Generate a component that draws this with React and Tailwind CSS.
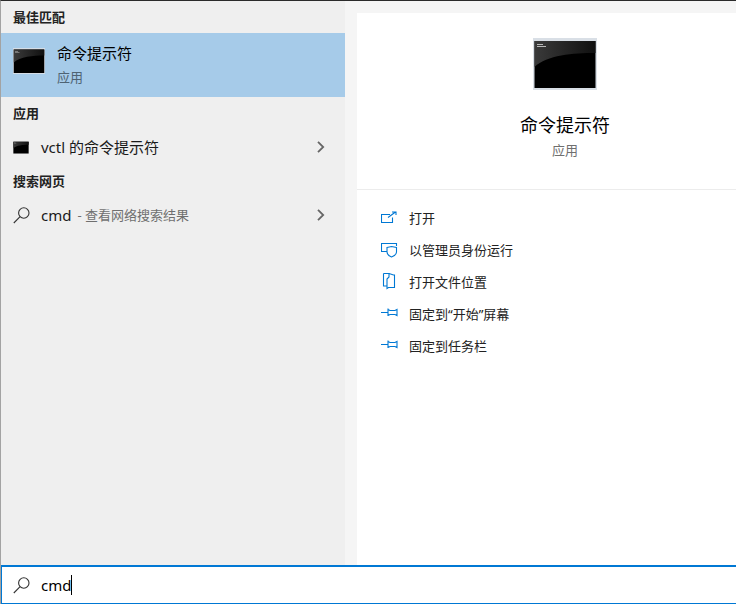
import React from 'react';

const SearchIcon = ({ className }) => (
  <svg viewBox="0 0 17 17" className={className} fill="none" stroke="#333" strokeWidth="1.1">
    <circle cx="10.8" cy="6" r="5.2" />
    <path d="M7.1 9.7 0.8 16" />
  </svg>
);

const Chevron = () => (
  <svg viewBox="0 0 8 12" className="ml-auto w-2 h-3" fill="none" stroke="#666" strokeWidth="1.8">
    <path d="M1 0.8 6.2 6 1 11.2" />
  </svg>
);

// little console window, big version has the glass frame
const ConsoleIcon = ({ id, className, frame }) => (
  <svg viewBox="0 0 64 52" className={className}>
    <defs>
      <linearGradient id={id} x1="0" y1="0" x2="1" y2="0">
        <stop offset="0" stopColor="#3a3a3a" />
        <stop offset="1" stopColor="#101010" />
      </linearGradient>
    </defs>
    <rect x="0" y="0" width="64" height="52" fill={frame} />
    <rect x="1.5" y="3" width="61" height="47" fill="#000" />
    <path d="M1.5 3H62.5V15C40 15 14 17 1.5 29Z" fill={`url(#${id})`} />
    <path d="M4 6h6v1H4zM4 8h9v1H4z" fill="#b8b8b8" />
  </svg>
);

const pin = <path d="M0 7.5H7M7 3.5V11M7 4.5 9 5.5H14L16 4.5V10.5L14 9.5H9L7 10.5" />;

const actions = [
  { label: '打开', icon: <path d="M9 5.5H.5V13.5H11.5V8.5M7 8.5 14.5 3M11 3H15V6" /> },
  {
    label: '以管理员身份运行',
    icon: <path d="M5.5 10.5H.5V2.5H15.5V5M6 6.5 10.5 5.5 15.5 6.5V11C15.5 13 13.5 14.8 10.5 16C7.5 14.8 6 13 6 11Z" />,
  },
  { label: '打开文件位置', icon: <path d="M2.5 .5V13H5.5M2.5 .5H8L12.5 2H13.5V14.5H7.5L6 15.5V6L8 4V.5" /> },
  { label: '固定到“开始”屏幕', icon: pin },
  { label: '固定到任务栏', icon: pin },
];

export default function App() {
  return (
    <div className="w-[736px] h-[604px] flex flex-col overflow-hidden bg-[#f5f5f5] border-t border-l border-t-[#2b2b2b] border-l-[#a3a3a3] font-['Noto_Sans','Noto_Sans_CJK_SC',sans-serif] text-[#1a1a1a]">
      <div className="flex-1 min-h-0 flex">
        {/* results column */}
        <div className="w-[344px] shrink-0 bg-[#efefef] flex flex-col">
          <div className="h-8 pl-3 pt-px flex items-center text-[13px] font-semibold text-[#222]">最佳匹配</div>
          <div className="h-16 bg-[#a6cbe9] flex items-center">
            <ConsoleIcon id="cmd-a" frame="#d5dde6" className="w-8 h-[26px] ml-3 mb-2" />
            <div className="ml-[12px] flex flex-col -mt-[1px]">
              <span className="text-[15px] leading-[22px] text-black">命令提示符</span>
              <span className="text-[13px] leading-[20px] mt-[3px] text-[#4f6373]">应用</span>
            </div>
          </div>
          <div className="h-8 pl-3 pt-px flex items-center text-[13px] font-semibold text-[#222]">应用</div>
          <div className="h-9 flex items-center pl-3 pr-[20px]">
            <ConsoleIcon id="cmd-b" frame="#e4e4e4" className="w-4 h-[13px]" />
            <span className="ml-3 text-[15px]">vctl 的命令提示符</span>
            <Chevron />
          </div>
          <div className="h-8 pl-3 pt-px flex items-center text-[13px] font-semibold text-[#222]">搜索网页</div>
          <div className="h-9 flex items-center pl-3 pr-[20px]">
            <SearchIcon className="w-[17px] h-[17px]" />
            <span className="ml-[11px] text-[15px]">cmd</span>
            <span className="ml-[6px] pt-px text-[13px] text-[#6f6f6f]">- 查看网络搜索结果</span>
            <Chevron />
          </div>
        </div>

        {/* detail panel runs past the window edge */}
        <div className="w-[428px] shrink-0 pl-3 pt-3">
          <div className="h-full bg-white flex flex-col">
            <div className="h-[177px] flex flex-col items-center border-b border-[#ececec]">
              <ConsoleIcon id="cmd-c" frame="#d9dfe6" className="w-16 h-[52px] mt-[25px]" />
              <span className="mt-[21px] text-[18px] leading-7 text-black">命令提示符</span>
              <span className="mt-[1px] text-[13px] leading-5 text-[#6f6f6f]">应用</span>
            </div>
            <div className="pt-[12px] pl-6 flex flex-col">
              {actions.map((a) => (
                <div key={a.label} className="h-8 flex items-center">
                  <svg viewBox="0 0 19 18" className="w-[19px] h-[18px] shrink-0" fill="none" stroke="#0078d4" strokeWidth="1.1">
                    {a.icon}
                  </svg>
                  <span className="ml-[9px] pt-[2px] text-[13px] text-[#222]">{a.label}</span>
                </div>
              ))}
            </div>
          </div>
        </div>
      </div>

      {/* search box */}
      <div className="h-[39px] -ml-px bg-white border-t-2 border-l-2 border-b border-[#0078d4] flex items-center pl-[11px]">
        <SearchIcon className="w-[17px] h-[17px]" />
        <span className="ml-[11px] text-[15px] text-black">cmd</span>
        <span className="w-px h-5 bg-black" />
      </div>
    </div>
  );
}
